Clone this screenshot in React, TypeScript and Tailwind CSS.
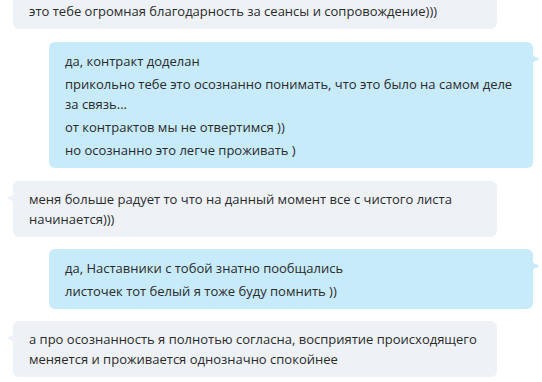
type Side = 'in' | 'out';

interface BubbleProps {
  side: Side;
  paragraphs: string[];
  tail?: boolean;
  className?: string;
}

function Tail({ side }: { side: Side }) {
  if (side === 'in') {
    return (
      <svg className="absolute left-[-6px] top-[10px]" width="7" height="14" viewBox="0 0 7 14">
        <path d="M7 0 C7 4 4 5 1.2 6 C0 6.5 0 7.5 1.2 8 C4 9 7 10 7 14 Z" fill="#eef2f7" />
      </svg>
    );
  }
  return (
    <svg className="absolute right-[-6px] top-[10px]" width="7" height="14" viewBox="0 0 7 14">
      <path d="M0 0 C0 4 3 5 5.8 6 C7 6.5 7 7.5 5.8 8 C3 9 0 10 0 14 Z" fill="#c7ebfb" />
    </svg>
  );
}

function Bubble({ side, paragraphs, tail = true, className = '' }: BubbleProps) {
  const base =
    side === 'in'
      ? 'ml-[13px] bg-[#eef2f7] py-[8px]'
      : 'ml-[49px] bg-[#c7ebfb] pt-[9px] pb-[8px]';
  return (
    <div className={`relative w-[484px] rounded-[6px] px-4 ${base} ${className}`}>
      {tail && <Tail side={side} />}
      <div className="flex flex-col gap-[3px]">
        {paragraphs.map((p, i) => (
          <p key={i} className="text-[13px] leading-[20px] text-[#2a2a2a]">
            {p}
          </p>
        ))}
      </div>
    </div>
  );
}

export default function App() {
  return (
    <div
      className="h-[382px] w-[542px] overflow-hidden bg-white"
      style={{ fontFamily: '"Open Sans", "Noto Sans", sans-serif' }}
    >
      <div className="flex flex-col gap-3">
        <Bubble
          side="in"
          tail={false}
          className="-mt-[7px] mb-[1px]"
          paragraphs={['это тебе огромная благодарность за сеансы и сопровождение)))']}
        />
        <Bubble
          side="out"
          className="mb-[1px]"
          paragraphs={[
            'да, контракт доделан',
            'прикольно тебе это осознанно понимать, что это было на самом деле за связь...',
            'от контрактов мы не отвертимся ))',
            'но осознанно это легче проживать )',
          ]}
        />
        <Bubble
          side="in"
          paragraphs={['меня больше радует то что на данный момент все с чистого листа начинается)))']}
        />
        <Bubble
          side="out"
          paragraphs={['да, Наставники с тобой знатно пообщались', 'листочек тот белый я тоже буду помнить ))']}
        />
        <Bubble
          side="in"
          paragraphs={[
            'а про осознанность я полнотью согласна, восприятие происходящего меняется и проживается однозначно спокойнее',
          ]}
        />
      </div>
    </div>
  );
}
